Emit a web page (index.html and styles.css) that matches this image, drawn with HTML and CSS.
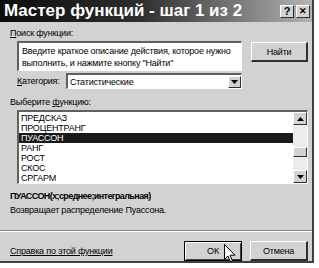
FILE: index.html
```html
<!DOCTYPE html>
<html lang="ru">
    <head>
        <title>Мастер функций</title>
        <link rel="stylesheet" href="styles.css">
    </head>
    <body>
        <div class="dialog">
            <div class="titlebar">
                <span class="title">Мастер функций - шаг 1 из 2</span>
                <div class="title-btns">
                    <span class="tbtn">?</span>
                    <span class="tbtn tbtn-close">&#x2715;</span>
                </div>
            </div>
            <div class="body">
                <div class="label"><u>П</u>оиск функции:</div>
                <div class="search-row">
                    <div class="search-box">Введите краткое описание действия, которое нужно выполнить, и нажмите кнопку "Найти"</div>
                    <div class="btn btn-find">Найти</div>
                </div>
                <div class="cat-row">
                    <span class="cat-label"><u>К</u>атегория:</span>
                    <div class="select">
                        <span class="select-text">Статистические</span>
                        <span class="drop"><svg width="7" height="4" viewBox="0 0 7 4"><path d="M0 0h7L3.5 4z" fill="#000"/></svg></span>
                    </div>
                </div>
                <div class="label label-list">Выберите <u>ф</u>ункцию:</div>
                <div class="list">
                    <div class="items">
                        <div class="item">ПРЕДСКАЗ</div>
                        <div class="item">ПРОЦЕНТРАНГ</div>
                        <div class="item selected">ПУАССОН</div>
                        <div class="item">РАНГ</div>
                        <div class="item">РОСТ</div>
                        <div class="item">СКОС</div>
                        <div class="item">СРГАРМ</div>
                    </div>
                    <div class="scrollbar">
                        <span class="sbtn"><svg width="7" height="4" viewBox="0 0 7 4"><path d="M3.5 0L7 4H0z" fill="#000"/></svg></span>
                        <div class="track"><span class="thumb"></span></div>
                        <span class="sbtn"><svg width="7" height="4" viewBox="0 0 7 4"><path d="M0 0h7L3.5 4z" fill="#000"/></svg></span>
                    </div>
                </div>
                <div class="sig">ПУАССОН(x;среднее;интегральная)</div>
                <div class="desc">Возвращает распределение Пуассона.</div>
            </div>
            <div class="sep"></div>
            <div class="footer">
                <span class="help">Справка по этой функции</span>
                <div class="btns">
                    <div class="btn btn-ok">ОК</div>
                    <div class="btn">Отмена</div>
                </div>
            </div>
            <svg class="cursor" width="12" height="19" viewBox="0 0 12 19">
                <path d="M0.5 0.5v15l3.5-3.5 2.5 6 2-1-2.5-5.8h5z" fill="#fff" stroke="#000" stroke-width="1"/>
            </svg>
        </div>
    </body>
</html>
```

FILE: styles.css
```css
body {
    margin: 0;
    background: #fff;
    font-family: "Liberation Sans", Arial, sans-serif;
    font-size: 9px;
    letter-spacing: -0.2px;
    color: #000;
}
.dialog {
    position: relative;
    width: 312px;
    height: 261px;
    background: #d2d2d2;
    border-right: 2px solid #404040;
    border-bottom: 2px solid #404040;
}
.titlebar {
    height: 22px;
    display: flex;
    align-items: center;
    justify-content: space-between;
    padding: 0 2px 0 4px;
    background: linear-gradient(to right, #0c0c0c, #2e2e2e 45%, #b4b4b4);
}
.title {
    color: #fff;
    font-weight: bold;
    font-size: 17px;
    letter-spacing: 0;
}
.title-btns {
    display: flex;
    gap: 2px;
}
.tbtn {
    width: 14px;
    height: 13px;
    background: #d2d2d2;
    border-top: 1px solid #fff;
    border-left: 1px solid #fff;
    border-right: 1px solid #303030;
    border-bottom: 1px solid #303030;
    box-sizing: border-box;
    font-size: 11px;
    font-weight: bold;
    line-height: 11px;
    text-align: center;
}
.tbtn-close {
    font-size: 9px;
}
.body {
    padding: 0 4px 0 10px;
}
.label {
    margin-top: 5px;
    line-height: 12px;
}
.search-row {
    display: flex;
    align-items: flex-start;
    gap: 9px;
    margin-top: 2px;
    padding-left: 7px;
}
.search-box {
    width: 226px;
    height: 30px;
    box-sizing: border-box;
    background: #fff;
    border-top: 2px solid #606060;
    border-left: 2px solid #606060;
    border-right: 1px solid #fff;
    border-bottom: 1px solid #fff;
    padding: 2px 2px 0 3px;
    line-height: 12px;
}
.btn {
    width: 58px;
    height: 20px;
    box-sizing: border-box;
    border-top: 1px solid #fff;
    border-left: 1px solid #fff;
    border-right: 2px solid #303030;
    border-bottom: 2px solid #303030;
    display: flex;
    align-items: center;
    justify-content: center;
}
.btn-find {
    margin-top: 1px;
    width: 57px;
}
.cat-row {
    display: flex;
    align-items: center;
    margin-top: 2px;
    padding-left: 7px;
}
.cat-label {
    width: 49px;
}
.select {
    width: 176px;
    height: 16px;
    box-sizing: border-box;
    background: #fff;
    border-top: 2px solid #606060;
    border-left: 2px solid #606060;
    border-right: 1px solid #fff;
    border-bottom: 1px solid #fff;
    display: flex;
    justify-content: space-between;
    align-items: center;
}
.select-text {
    padding-left: 2px;
}
.drop {
    width: 13px;
    height: 12px;
    box-sizing: border-box;
    background: #d2d2d2;
    border-top: 1px solid #fff;
    border-left: 1px solid #fff;
    border-right: 1px solid #303030;
    border-bottom: 1px solid #303030;
    display: flex;
    align-items: center;
    justify-content: center;
}
.label-list {
    margin-top: 7px;
}
.list {
    display: flex;
    margin-top: 2px;
    margin-left: 7px;
    width: 291px;
    height: 74px;
    box-sizing: border-box;
    background: #fff;
    border-top: 2px solid #606060;
    border-left: 2px solid #606060;
    border-right: 1px solid #fff;
    border-bottom: 1px solid #fff;
}
.items {
    flex: 1;
    padding-top: 1px;
}
.item {
    height: 10px;
    line-height: 10px;
    padding-left: 2px;
}
.selected {
    background: #1a1a1a;
    color: #fff;
}
.scrollbar {
    width: 14px;
    display: flex;
    flex-direction: column;
    background: #ececec;
}
.sbtn {
    height: 13px;
    box-sizing: border-box;
    background: #d2d2d2;
    border-top: 1px solid #fff;
    border-left: 1px solid #fff;
    border-right: 1px solid #303030;
    border-bottom: 1px solid #303030;
    display: flex;
    align-items: center;
    justify-content: center;
}
.track {
    flex: 1;
    padding-top: 22px;
}
.thumb {
    display: block;
    height: 8px;
    background: #d2d2d2;
    border-top: 1px solid #fff;
    border-left: 1px solid #fff;
    border-right: 1px solid #303030;
    border-bottom: 1px solid #303030;
}
.sig {
    margin-top: 6px;
    font-weight: bold;
    letter-spacing: -0.6px;
    line-height: 12px;
}
.desc {
    margin-top: 2px;
    line-height: 12px;
}
.sep {
    margin-top: 14px;
    border-top: 1px solid #808080;
    border-bottom: 1px solid #fff;
}
.footer {
    display: flex;
    justify-content: space-between;
    align-items: center;
    padding: 9px 4px 0 10px;
}
.help {
    text-decoration: underline;
}
.btns {
    display: flex;
    gap: 8px;
}
.btn-ok {
    border: 1px solid #000;
    box-shadow: inset 1px 1px 0 #fff, inset -1px -1px 0 #404040;
}
.cursor {
    position: absolute;
    left: 224px;
    top: 244px;
}
```
